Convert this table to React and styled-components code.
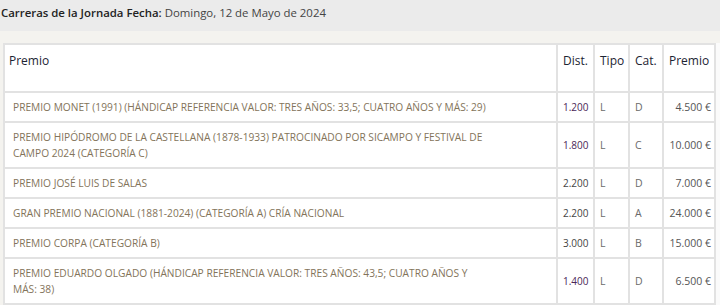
import React from 'react';
import styled, { createGlobalStyle } from 'styled-components';

const races = [
  {
    name: 'PREMIO MONET (1991) (HÁNDICAP REFERENCIA VALOR: TRES AÑOS: 33,5; CUATRO AÑOS Y MÁS: 29)',
    dist: '1.200',
    visited: true,
    type: 'L',
    cat: 'D',
    prize: '4.500 €',
  },
  {
    name: 'PREMIO HIPÓDROMO DE LA CASTELLANA (1878-1933) PATROCINADO POR SICAMPO Y FESTIVAL DE CAMPO 2024 (CATEGORÍA C)',
    dist: '1.800',
    visited: true,
    type: 'L',
    cat: 'C',
    prize: '10.000 €',
  },
  { name: 'PREMIO JOSÉ LUIS DE SALAS', dist: '2.200', type: 'L', cat: 'D', prize: '7.000 €' },
  {
    name: 'GRAN PREMIO NACIONAL (1881-2024) (CATEGORÍA A) CRÍA NACIONAL',
    dist: '2.200',
    type: 'L',
    cat: 'A',
    prize: '24.000 €',
  },
  { name: 'PREMIO CORPA (CATEGORÍA B)', dist: '3.000', type: 'L', cat: 'B', prize: '15.000 €' },
  {
    name: 'PREMIO EDUARDO OLGADO (HÁNDICAP REFERENCIA VALOR: TRES AÑOS: 43,5; CUATRO AÑOS Y MÁS: 38)',
    dist: '1.400',
    visited: true,
    type: 'L',
    cat: 'D',
    prize: '6.500 €',
  },
];

export default function App() {
  return (
    <Page>
      <GlobalStyle />
      <TitleBar>
        <strong>Carreras de la Jornada</strong>
        <DateLabel>
          <strong>Fecha:</strong> Domingo, 12 de Mayo de 2024
        </DateLabel>
      </TitleBar>
      <TableWrap>
        <RaceTable>
          <colgroup>
            <col style={{ width: 553 }} />
            <col style={{ width: 37 }} />
            <col style={{ width: 35 }} />
            <col style={{ width: 34 }} />
            <col style={{ width: 52 }} />
          </colgroup>
          <thead>
            <tr>
              <HeadCell>Premio</HeadCell>
              <HeadCell>Dist.</HeadCell>
              <HeadCell>Tipo</HeadCell>
              <HeadCell>Cat.</HeadCell>
              <HeadCell>Premio</HeadCell>
            </tr>
          </thead>
          <tbody>
            {races.map((race) => (
              <tr key={race.name}>
                <NameCell>{race.name}</NameCell>
                <DistCell $visited={race.visited}>{race.dist}</DistCell>
                <Cell>{race.type}</Cell>
                <Cell>{race.cat}</Cell>
                <PrizeCell>{race.prize}</PrizeCell>
              </tr>
            ))}
          </tbody>
        </RaceTable>
      </TableWrap>
    </Page>
  );
}

const GlobalStyle = createGlobalStyle`
  html, body {
    margin: 0;
    padding: 0;
    background: #f4f3ef;
  }
  body {
    font-family: 'Open Sans', 'Liberation Sans', sans-serif;
  }
`;

const Page = styled.div`
  width: 720px;
  height: 305px;
  overflow: hidden;
  background: #f4f3ef;
`;

const TitleBar = styled.div`
  height: 31px;
  background: #ebebeb;
  display: flex;
  align-items: flex-start;
  gap: 3px;
  padding: 5px 0 0 1px;
  box-sizing: border-box;
  font-size: 11.4px;
  color: #222;
  white-space: nowrap;

  strong {
    font-weight: 600;
  }
`;

const DateLabel = styled.span`
  color: #444;
  font-weight: 400;

  strong {
    color: #222;
  }
`;

const TableWrap = styled.div`
  margin: 12px 0 0 3px;
  background: #fbfbfb;
`;

const RaceTable = styled.table`
  table-layout: fixed;
  width: 713px;
  border-collapse: collapse;
  background: #fff;
  border: 2px solid #e2e2e2;
`;

const HeadCell = styled.th`
  height: 39px;
  padding: 7px 5px 0;
  vertical-align: top;
  text-align: left;
  font-size: 12px;
  font-weight: 500;
  color: #1d2433;
  border: 2px solid #e2e2e2;
  white-space: nowrap;

  &:first-child {
    padding-left: 4px;
  }
`;

const Cell = styled.td`
  padding: 6px 5px;
  line-height: 16px;
  font-size: 10.5px;
  color: #6a6a6a;
  border: 2px solid #e2e2e2;
  vertical-align: middle;
  white-space: nowrap;
`;

const NameCell = styled(Cell)`
  padding-left: 8px;
  padding-right: 66px;
  font-size: 10.2px;
  color: #83745a;
  white-space: normal;
`;

const DistCell = styled(Cell)`
  font-size: 10px;
  color: ${(p) => (p.$visited ? '#4a2757' : '#444')};
`;

const PrizeCell = styled(Cell)`
  text-align: right;
  padding-right: 3px;
  color: #555;
`;
